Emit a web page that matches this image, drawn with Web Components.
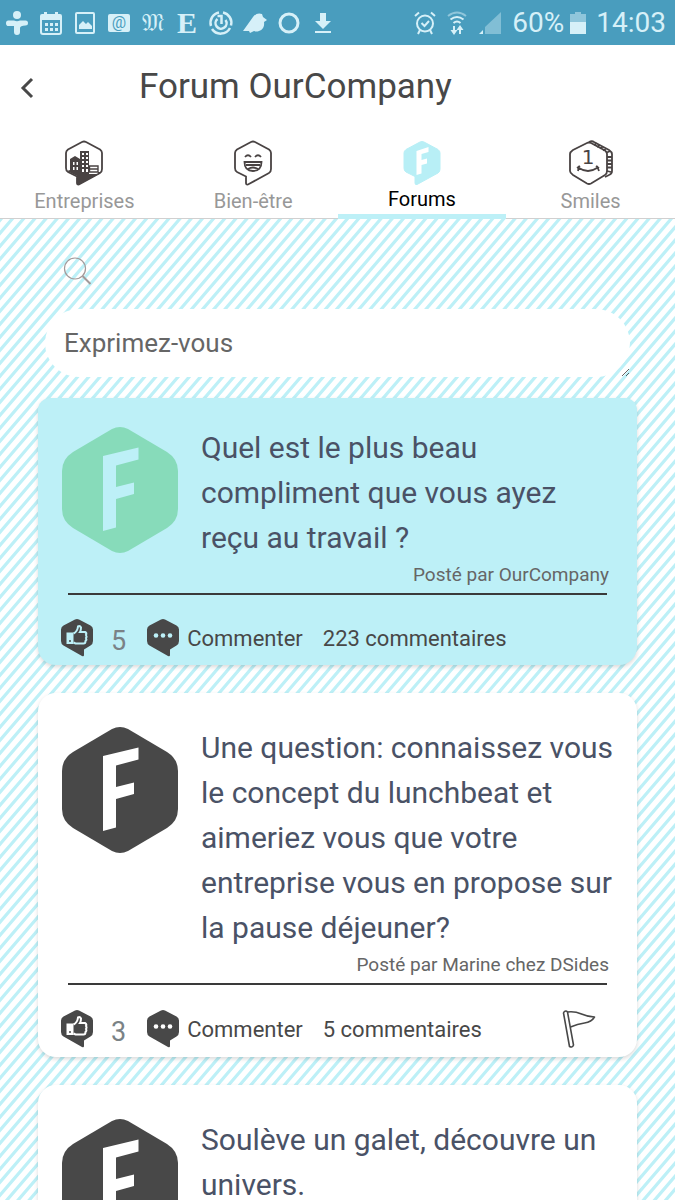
<!DOCTYPE html>
<html lang="fr">
<head>
    <meta charset="UTF-8">
    <meta name="viewport" content="width=device-width, initial-scale=1">
    <title>Forum OurCompany</title>
    <style>
        body {
            --cyan: #bdf0f7;
            --dark: #484848;
            margin: 0;
            font-family: Roboto, "Noto Sans", sans-serif;
            color: var(--dark);
            background-color: white;
        }
    </style>
</head>
<body>
    <forum-app>
        <status-bar slot="top" battery="60%" time="14:03"></status-bar>
        <app-header slot="top">Forum OurCompany</app-header>
        <tab-bar slot="top">
            <tab-item icon="company">Entreprises</tab-item>
            <tab-item icon="laugh">Bien-être</tab-item>
            <tab-item icon="forum" active>Forums</tab-item>
            <tab-item icon="coin">Smiles</tab-item>
        </tab-bar>

        <post-composer placeholder="Exprimez-vous"></post-composer>

        <forum-card featured author="OurCompany" likes="5" comments="223">Quel est le plus beau compliment que vous ayez reçu au travail ?</forum-card>
        <forum-card flag author="Marine chez DSides" likes="3" comments="5">Une question: connaissez vous le concept du lunchbeat et aimeriez vous que votre entreprise vous en propose sur la pause déjeuner?</forum-card>
        <forum-card>Soulève un galet, découvre un univers.</forum-card>
    </forum-app>

    <script>
        class BaseElement extends HTMLElement {
            constructor() {
                super();
                this.attachShadow({ mode: 'open' });
            }

            connectedCallback() {
                const template = document.createElement('template');
                template.innerHTML = `<style>${this.getStyles()}</style>${this.getTemplate()}`;
                this.shadowRoot.replaceChildren(template.content.cloneNode(true));
            }
        }

        class ForumApp extends BaseElement {
            getTemplate() {
                return `
                <slot name="top"></slot>
                <main class="feed"><slot></slot></main>
                `;
            }

            // seamless tile: six stripes across and six down
            getTile() {
                let lines = '';
                for (let n = 0; n < 13; n++) {
                    lines += `M${n * 67 - 469} 546L${n * 67 + 67} -78`;
                }
                return encodeURIComponent(`<svg xmlns="http://www.w3.org/2000/svg" width="67" height="78" viewBox="0 0 402 468"><path d="${lines}" stroke="#bdf0f7" stroke-width="19" fill="none"/></svg>`);
            }

            getStyles() {
                return `
                :host {
                    display: flex;
                    flex-direction: column;
                    height: 100vh;
                    overflow: hidden;
                }
                .feed {
                    flex: 1;
                    min-height: 0;
                    overflow: hidden;
                    display: flex;
                    flex-direction: column;
                    gap: 28px;
                    padding: 38px 38px 0;
                    background: white url('data:image/svg+xml,${this.getTile()}') 1px 0;
                }
                `;
            }
        }

        class StatusBar extends BaseElement {
            getTemplate() {
                return `
                <div class="icons">
                    <svg width="24" height="26" viewBox="0 0 24 26" fill="currentColor"><circle cx="12" cy="5" r="4"/><path d="M3.500 10.500H9q3 1.500 6 0h5.500q2.500 0 2.500 2.500t-2.500 2.500Q15 15.500 15 18v4q0 3-3 3t-3-3v-6H3.500Q1 16 1 13.200t2.500-2.700z"/></svg>
                    <svg width="24" height="24" viewBox="0 0 24 24"><path d="M3 4h18q1 0 1 1v16q0 2-2 2H4q-2 0-2-2V5q0-1 1-1z" fill="none" stroke="currentColor" stroke-width="2"/><path d="M2 4h20v5H2zM5 1h3v4H5zM16 1h3v4h-3zM6 12h3v3H6zM11 12h3v3h-3zM16 12h3v3h-3zM6 17h3v3H6zM11 17h3v3h-3zM16 17h3v3h-3z" fill="currentColor"/></svg>
                    <svg width="22" height="24" viewBox="0 0 22 24"><rect x="2" y="2" width="18" height="20" rx="1" fill="none" stroke="currentColor" stroke-width="2"/><path d="M5 18v-4l4-4 3 3 2-2 4 4v3z" fill="currentColor"/></svg>
                    <span class="mail">@</span>
                    <span class="fraktur">𝔐</span>
                    <span class="serif">E</span>
                    <svg width="26" height="26" viewBox="0 0 26 26" fill="none" stroke="currentColor" stroke-width="2.5"><path d="M15 2.500a10.500 10.500 0 0 1 8 13M22 18a10.500 10.500 0 0 1-18 1M3 16A10.500 10.500 0 0 1 11 2.500"/><path d="M9.500 9a5.500 5.500 0 1 0 8 1M9.500 6h4v8"/></svg>
                    <svg width="24" height="22" viewBox="0 0 24 22" fill="currentColor"><path d="M0 19L10 5q4-5 9-3l1 3 4 3-3 2q1 7-5 9-3 1-5 0l-4 2-1-2z"/></svg>
                    <svg width="24" height="24" viewBox="0 0 24 24"><circle cx="12" cy="12" r="9" fill="none" stroke="currentColor" stroke-width="3"/></svg>
                    <svg width="20" height="24" viewBox="0 0 20 24" fill="currentColor"><path d="M7 2h6v8h5l-8 8-8-8h5zM2 20h16v2H2z"/></svg>
                </div>
                <div class="system">
                    <svg width="22" height="24" viewBox="0 0 22 24" fill="none" stroke="currentColor" stroke-width="2"><circle cx="11" cy="12.5" r="8"/><path d="M7.500 12l3 3 4.500-5M1 5l4-3.500M21 5l-4-3.500M6 19l-2 4M16 19l2 4"/></svg>
                    <svg width="22" height="26" viewBox="0 0 22 26" fill="none" stroke="currentColor" stroke-width="2"><path d="M2 6q9-7 18 0" opacity=".5"/><path d="M4.500 9.500q6.500-5 13 0M7.500 13q3.500-3 7 0M8 16v5M14 24v-6"/><path d="M4.500 20h7L8 25zM10.500 20h7L14 15z" fill="currentColor" stroke="none"/></svg>
                    <svg width="24" height="24" viewBox="0 0 24 24" fill="currentColor"><path d="M23 1v22H7V16z" opacity=".4"/><path d="M5 19v4H1z"/></svg>
                    <div class="battery">
                        <span>${this.getAttribute('battery')}</span>
                        <svg width="16" height="24" viewBox="0 0 16 24" fill="currentColor"><path d="M0 3h5V1h6v2h5v8H0z" opacity=".5"/><path d="M0 11h16v12H0z"/></svg>
                    </div>
                    <span>${this.getAttribute('time')}</span>
                </div>
                `;
            }

            getStyles() {
                return `
                :host {
                    display: flex;
                    justify-content: space-between;
                    align-items: center;
                    height: 45px;
                    padding: 0 9px 0 5px;
                    box-sizing: border-box;
                    color: #d6f0f8;
                    background-color: #499dbe;
                }
                svg {
                    flex: none;
                }
                .icons {
                    display: grid;
                    grid-template-columns: repeat(10, 24px);
                    gap: 10px;
                    align-items: center;
                    justify-items: center;
                }
                .system, .battery {
                    display: flex;
                    align-items: center;
                }
                .system {
                    gap: 10px;
                    font-size: 28px;
                }
                .battery {
                    gap: 6px;
                }
                .mail {
                    width: 22px;
                    border-radius: 2px;
                    font-size: 16px;
                    line-height: 18px;
                    text-align: center;
                    color: #499dbe;
                    background-color: #d6f0f8;
                }
                .fraktur {
                    font: 24px/24px "DejaVu Sans", sans-serif;
                }
                .serif {
                    font: bold 30px/30px "Liberation Serif", serif;
                }
                `;
            }
        }

        class AppHeader extends BaseElement {
            getTemplate() {
                return `
                <button type="button" aria-label="Retour">
                    <svg width="14" height="22" viewBox="0 0 14 22"><path d="M12 2L3 11l9 9" fill="none" stroke="currentColor" stroke-width="3"/></svg>
                </button>
                <h1><slot></slot></h1>
                `;
            }

            getStyles() {
                return `
                :host {
                    display: flex;
                    align-items: center;
                    height: 84px;
                    padding: 0 20px;
                }
                button {
                    width: 119px;
                    padding: 4px 0 0;
                    border: none;
                    text-align: left;
                    color: inherit;
                    background: none;
                }
                h1 {
                    margin: 0;
                    font-size: 35px;
                    font-weight: 400;
                    line-height: 42px;
                }
                `;
            }
        }

        class TabBar extends BaseElement {
            getTemplate() {
                return `<nav><slot></slot></nav>`;
            }

            getStyles() {
                return `
                :host {
                    display: block;
                    border-bottom: 1px solid #d0d0d0;
                }
                nav {
                    display: grid;
                    grid-template-columns: repeat(4, 1fr);
                }
                `;
            }
        }

        const BUBBLE = 'M17 2Q19 1 21 2L35 9.500Q37 11 37 13V29Q37 32 35 33L14 44.500Q12 45 12 43V36.500L3 32Q1 31 1 28V13Q1 11 3 9.500Z';

        const TAB_ICONS = {
            company: `
                <svg width="38" height="46" viewBox="0 0 38 46">
                    <path d="${BUBBLE}" fill="none" stroke="#494343" stroke-width="1.8"/>
                    <path d="M2 31l3-1V19l5-3 5 3V11h9v23h9v-2h3l-2 2-21 11-1-1v-8z" fill="#494343"/>
                    <path d="M8 22h1.500v3H8zM11.500 22H13v3h-1.500zM8 27h1.500v3H8zM11.500 27H13v3h-1.500zM17 13h2v2h-2zM21 13h2v2h-2zM17 17h2v2h-2zM21 17h2v2h-2zM17 21h2v2h-2zM21 21h2v2h-2zM17 25h2v2h-2zM21 25h2v2h-2zM17 29h2v3h-2zM21 29h2v3h-2z" fill="white"/>
                    <path d="M24.500 26H33v6h-8.500zM24 29h9" fill="white" stroke="#494343" stroke-width="1.4"/>
                </svg>`,
            laugh: `
                <svg width="38" height="46" viewBox="0 0 38 46" fill="none" stroke="#494343" stroke-width="1.8">
                    <path d="${BUBBLE}"/>
                    <path d="M11 17q3-3.500 6 0M21 17q3-3.500 6 0"/>
                    <path d="M10.500 22h17q0 9-8.500 9t-8.500-9zM12 25h14M14 29q5-3 10 0"/>
                </svg>`,
            forum: `
                <svg width="38" height="46" viewBox="0 0 38 46">
                    <path d="${BUBBLE}" fill="#b8eff6" stroke="#b8eff6"/>
                    <path d="M13.500 11l12-4v5l-7 2v6l5.500-1.500v5L18.500 25v8.500l-5 1.500z" fill="white"/>
                </svg>`,
            coin: `
                <svg width="44" height="46" viewBox="0 0 44 46" fill="none" stroke="#494343" stroke-width="1.8">
                    <path d="M18 3q2-1 4 0l14 7.500q2 1.500 2 3.500v17q0 3-2 4l-14 8.500q-2 1-4 0L4 35q-3-2-3-4V14q0-2 3-4z"/>
                    <path d="M20 2q3-1.500 5 0l15 8q3 2 3 4v17q0 3-3 4l-4 2M25 5l3-2M28 7l3-2M31 8.500l3-2M34 10.500l3-2M37 13l4-2M38 17h5M38 20.500h5M38 24h5M38 27.500h5M38 31l4 1"/>
                    <path d="M10 28q9 6 18 0M8 28l3-2M30 28l-3-2M10 26l-1 5M28 26l2 5"/>
                    <text x="19" y="24" text-anchor="middle" font-family="DejaVu Sans" font-size="20" fill="#494343" stroke="none">1</text>
                </svg>`
        };

        class TabItem extends BaseElement {
            getTemplate() {
                return `
                <a href="#">
                    ${TAB_ICONS[this.getAttribute('icon')]}
                    <slot></slot>
                </a>
                `;
            }

            getStyles() {
                return `
                :host {
                    display: block;
                }
                a {
                    display: flex;
                    flex-direction: column;
                    align-items: center;
                    height: 89px;
                    padding-top: 11px;
                    box-sizing: border-box;
                    font-size: 20px;
                    line-height: 30px;
                    text-decoration: none;
                    color: #989898;
                }
                :host([active]) a {
                    height: 90px;
                    margin-bottom: -1px;
                    border-bottom: 5px solid var(--cyan);
                    line-height: 26px;
                    color: black;
                }
                `;
            }
        }

        class PostComposer extends BaseElement {
            getTemplate() {
                return `
                <button type="button" aria-label="Rechercher">
                    <svg width="30" height="30" viewBox="0 0 30 30" fill="none" stroke="#a39a9a"><circle cx="12" cy="11.5" r="10.5" stroke-width="1.2"/><path d="M19.500 19l8 8" stroke-width="2"/></svg>
                </button>
                <textarea rows="1" aria-label="${this.getAttribute('placeholder')}" placeholder="${this.getAttribute('placeholder')}"></textarea>
                `;
            }

            getStyles() {
                return `
                :host {
                    display: flex;
                    flex-direction: column;
                    align-items: flex-start;
                    gap: 22px;
                    margin: 0 7px -7px;
                }
                button {
                    display: flex;
                    margin-left: 18px;
                    padding: 0;
                    border: none;
                    background: none;
                }
                textarea {
                    width: 100%;
                    height: 68px;
                    padding: 19px;
                    box-sizing: border-box;
                    border: none;
                    border-radius: 34px;
                    font-family: inherit;
                    font-size: 26px;
                    line-height: 30px;
                    background-color: white;
                }
                textarea::placeholder {
                    color: #666;
                }
                `;
            }
        }

        const SMALL_BUBBLE = 'M14 .6Q16-.5 18 .6L29.500 6.500Q32 8 32 10.500V22Q32 25 29.500 26.500L23 30.500V36Q23 38 21 37L2.500 26.500Q0 25 0 22V10.500Q0 8 2.500 6.500Z';

        class ForumCard extends BaseElement {
            getTemplate() {
                return `
                <article>
                    <header>
                        <svg class="logo" width="116" height="126" viewBox="0 0 116 126">
                            <path class="logo__hex" d="M50 2Q58-2 66 2L105 25Q116 32 116 44V82Q116 94 105 101L66 124Q58 128 50 124L11 101Q0 94 0 82V44Q0 32 11 25Z"/>
                            <path class="logo__mark" d="M41 29L76.500 20.500V32.500L54 38.500V60L72 55.500V67L54 72V100.500L41 104Z"/>
                        </svg>
                        <h2><slot></slot></h2>
                    </header>
                    ${this.hasAttribute('author') ? this.getFooter() : ''}
                </article>
                `;
            }

            getFooter() {
                const flag = `
                    <button class="flag" type="button" aria-label="Signaler">
                        <svg width="34" height="40" viewBox="0 0 34 40" fill="none" stroke="currentColor" stroke-width="1.6" stroke-linejoin="round"><path d="M2 3q2-2 3.500 0l6 33q-1 3-4 1.500L1.500 4z"/><path d="M5.500 3q7-1 14 2t13 3q-3 5-10 6t-14 4"/></svg>
                    </button>`;

                return `
                <p class="author">Posté par ${this.getAttribute('author')}</p>
                <footer>
                    <button class="like" type="button">
                        <svg width="32" height="38" viewBox="0 0 32 38"><path d="${SMALL_BUBBLE}" fill="currentColor"/><path class="light" d="M5.500 13.500h7V25h-7z"/><circle cx="9" cy="22" r="1" fill="currentColor"/><path class="line" d="M12.500 14.500q4-2 4.500-7 2-1 3 1 0 3-1 4.500h5q2 1 1 3 1 1.500 0 3 1 1.500-.5 3 0 2.500-2 2.500h-8l-2-1"/></svg>
                        <span class="count">${this.getAttribute('likes')}</span>
                    </button>
                    <button class="comment" type="button">
                        <svg width="32" height="38" viewBox="0 0 32 38"><path d="${SMALL_BUBBLE}" fill="currentColor"/><g class="light"><circle cx="9" cy="16.5" r="2.3"/><circle cx="16" cy="16.5" r="2.3"/><circle cx="23" cy="16.5" r="2.3"/></g></svg>
                        <span>Commenter</span>
                    </button>
                    <a href="#">${this.getAttribute('comments')} commentaires</a>
                    ${this.hasAttribute('flag') ? flag : ''}
                </footer>
                `;
            }

            getStyles() {
                return `
                :host {
                    --card: white;
                    --accent: var(--dark);
                    display: block;
                    flex: none;
                }
                :host([featured]) {
                    --card: var(--cyan);
                    --accent: #87dbba;
                }
                article {
                    padding: 32px 16px 8px 24px;
                    border-radius: 18px;
                    background-color: var(--card);
                    box-shadow: 0 2px 4px rgba(0, 0, 0, 0.15);
                }
                :host([featured]) article {
                    padding-top: 27px;
                    border-radius: 12px 12px 18px 18px;
                }
                header {
                    display: flex;
                    align-items: flex-start;
                    gap: 23px;
                }
                .logo {
                    flex: none;
                    padding-top: 2px;
                }
                .logo__hex {
                    fill: var(--accent);
                }
                .logo__mark, .light {
                    fill: var(--card);
                }
                .line {
                    fill: none;
                    stroke: var(--card);
                    stroke-width: 2;
                }
                h2 {
                    flex: 1;
                    margin: 0;
                    font-size: 30px;
                    font-weight: 400;
                    line-height: 45px;
                    color: #4a5266;
                }
                .author {
                    margin: 1px 12px 4px;
                    font-size: 19px;
                    line-height: 28px;
                    text-align: right;
                    color: #666;
                }
                footer {
                    display: flex;
                    align-items: center;
                    margin: 0 14px 0 6px;
                    padding-top: 24px;
                    border-top: 2px solid #3a3a3a;
                    font-size: 22px;
                }
                button {
                    display: flex;
                    align-items: center;
                    padding: 0;
                    border: none;
                    font: inherit;
                    color: inherit;
                    background: none;
                }
                a {
                    text-decoration: none;
                    color: inherit;
                }
                .like {
                    gap: 18px;
                    margin-left: -7px;
                }
                .count {
                    padding-top: 7px;
                    font-size: 27px;
                    line-height: 31px;
                    color: #7a8286;
                }
                .comment {
                    gap: 8px;
                    margin: 0 20px 0 21px;
                }
                .flag {
                    margin-left: auto;
                    margin-right: 11px;
                }
                `;
            }
        }

        customElements.define('forum-app', ForumApp)
        customElements.define('status-bar', StatusBar)
        customElements.define('app-header', AppHeader)
        customElements.define('tab-bar', TabBar)
        customElements.define('tab-item', TabItem)
        customElements.define('post-composer', PostComposer)
        customElements.define('forum-card', ForumCard)
    </script>
</body>
</html>
